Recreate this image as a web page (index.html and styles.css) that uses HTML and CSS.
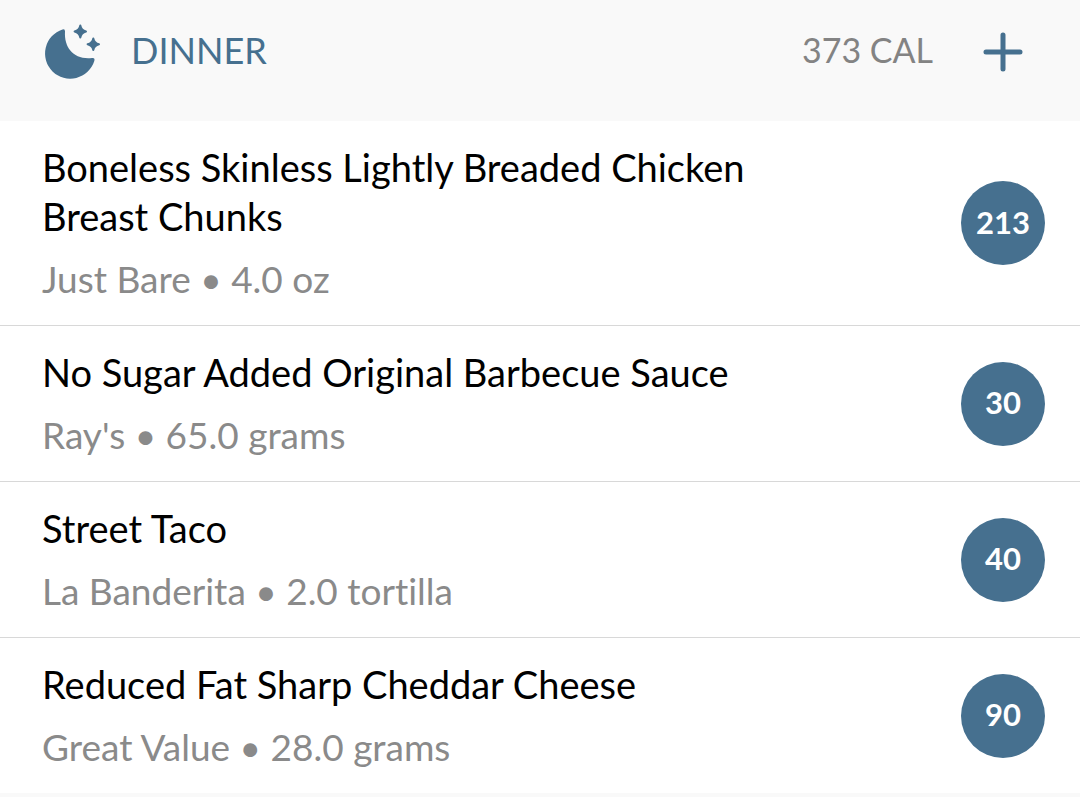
FILE: index.html
```html
<!DOCTYPE html>
<html lang="en">
<head>
  <meta charset="UTF-8" />
  <meta name="viewport" content="width=device-width, initial-scale=1.0" />
  <title>Dinner</title>
  <link rel="stylesheet" href="styles.css">
</head>
<body>
  <header class="meal-header">
    <svg class="meal-icon" viewBox="-1 0 56 56" aria-hidden="true">
      <path d="M17.500 5.500Q20 4.500 20 7.500C19 24 29 36 47 34Q50.300 33.500 49.300 37A25.200 25.200 0 1 1 17.500 5.500Z" />
      <path class="star" d="M35.300 1.500Q36.300 6.500 41 7.500Q36.300 8.500 35.300 13.500Q34.300 8.500 29.600 7.500Q34.300 6.500 35.300 1.500Z" />
      <path class="star" d="M48.300 14.500Q49.300 19.300 54 20.300Q49.300 21.300 48.300 26Q47.300 21.300 42.600 20.300Q47.300 19.300 48.300 14.500Z" />
    </svg>
    <h1>DINNER</h1>
    <span class="meal-total">373 CAL</span>
    <button class="add-food" type="button" aria-label="Add food">
      <svg viewBox="0 0 40 40" aria-hidden="true">
        <path d="M20 3v34M3 20h34" />
      </svg>
    </button>
  </header>

  <ul class="food-list">
    <li class="food">
      <div class="food-info">
        <h2>Boneless Skinless Lightly Breaded Chicken Breast Chunks</h2>
        <p>Just Bare • 4.0 oz</p>
      </div>
      <span class="calories">213</span>
    </li>
    <li class="food">
      <div class="food-info">
        <h2>No Sugar Added Original Barbecue Sauce</h2>
        <p>Ray's • 65.0 grams</p>
      </div>
      <span class="calories">30</span>
    </li>
    <li class="food">
      <div class="food-info">
        <h2>Street Taco</h2>
        <p>La Banderita • 2.0 tortilla</p>
      </div>
      <span class="calories">40</span>
    </li>
    <li class="food">
      <div class="food-info">
        <h2>Reduced Fat Sharp Cheddar Cheese</h2>
        <p>Great Value • 28.0 grams</p>
      </div>
      <span class="calories">90</span>
    </li>
  </ul>
</body>
</html>
```
FILE: styles.css
```css
body {
  margin: 0;
  font-family: Lato, "Liberation Sans", sans-serif;
  font-variant-ligatures: none;
  background-color: #f9f9f9;
  color: #000;
}
h1, h2, p, ul {
  margin: 0;
  padding: 0;
  font-weight: normal;
}

.meal-header {
  display: flex;
  align-items: center;
  padding: 24px 57px 41px 44px;
}
.meal-icon {
  width: 56px;
  height: 56px;
  margin-right: 31px;
  overflow: visible;
  fill: #46708f;
}
.star {
  stroke: #46708f;
  stroke-width: 2;
  stroke-linejoin: round;
}
.meal-header h1,
.meal-total {
  padding-bottom: 4px;
  line-height: 48px;
}
.meal-header h1 {
  flex: 1;
  font-size: 36px;
  color: #46708f;
}
.meal-total {
  font-size: 34px;
  color: #838383;
}
.add-food {
  display: flex;
  margin-left: 50px;
  padding: 0;
  border: 0;
  background: none;
  cursor: pointer;
}
.add-food svg {
  width: 40px;
  height: 40px;
  fill: none;
  stroke: #46708f;
  stroke-width: 5;
  stroke-linecap: round;
}

.food-list {
  list-style: none;
  background-color: #fff;
}
.food {
  display: flex;
  align-items: center;
  justify-content: space-between;
  gap: 24px;
  padding: 22px 35px 22px 42px;
  border-bottom: 1px solid #d8d8d8;
}
.food:last-child {
  border-bottom-color: #f9f9f9;
}
.food-info {
  max-width: 720px;
}
.food h2 {
  font-size: 38px;
  line-height: 49px;
}
.food p {
  margin-top: 13px;
  font-size: 37px;
  line-height: 49px;
  color: #8a8a8a;
}
.calories {
  display: flex;
  flex: none;
  align-items: center;
  justify-content: center;
  box-sizing: border-box;
  width: 84px;
  height: 84px;
  padding-bottom: 3px;
  border-radius: 50%;
  background-color: #46708f;
  color: #fff;
  font-size: 31px;
  font-weight: bold;
}
```
